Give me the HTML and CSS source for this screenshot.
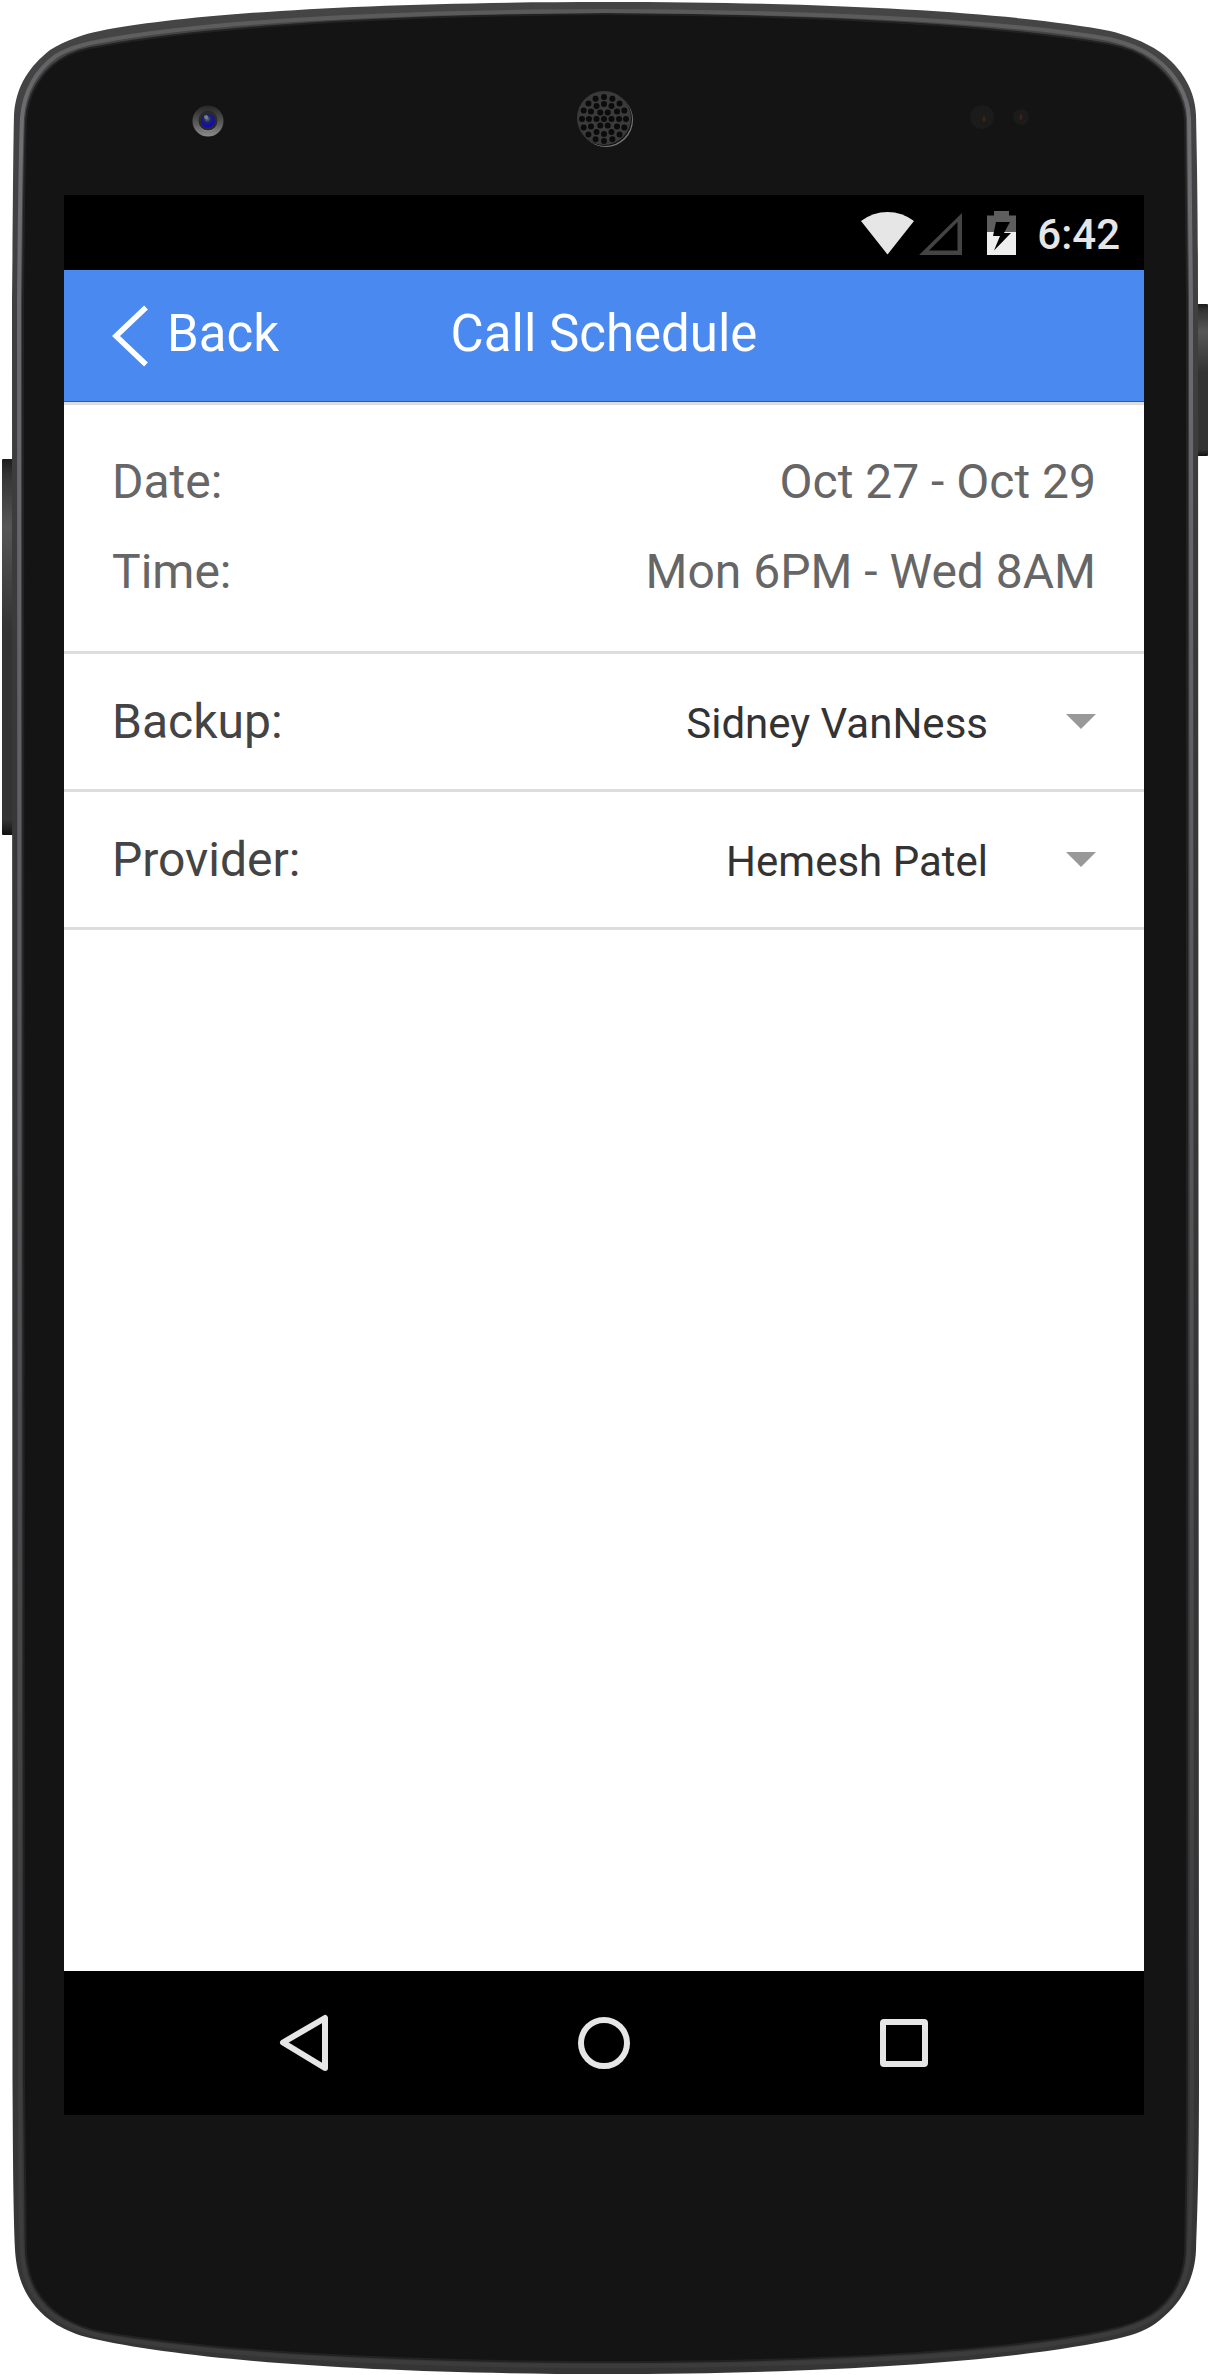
FILE: index.html
```html
<!DOCTYPE html>
<html lang="en">
<head>
  <meta charset="utf-8">
  <meta name="viewport" content="width=device-width, initial-scale=1">
  <title>Call Schedule</title>
  <link rel="stylesheet" href="styles.css">
</head>
<body>
  <div class="phone">
    <svg class="shell" viewBox="0 0 1210 2375" preserveAspectRatio="none" aria-hidden="true">
      <defs>
        <linearGradient id="rim" x1="0" y1="0" x2="0" y2="1">
          <stop offset="0" stop-color="#454546"/>
          <stop offset=".3" stop-color="#38383a"/>
          <stop offset="1" stop-color="#353536"/>
        </linearGradient>
        <linearGradient id="shine" x1="0" y1="0" x2="0" y2="1">
          <stop offset="0" stop-color="#5a5a5c"/>
          <stop offset=".05" stop-color="#707074"/>
          <stop offset=".4" stop-color="#5c5c60"/>
          <stop offset=".8" stop-color="#404042"/>
          <stop offset="1" stop-color="#3c3c3d"/>
        </linearGradient>
        <linearGradient id="key" x1="0" y1="0" x2="0" y2="1">
          <stop offset="0" stop-color="#1c1c1c"/>
          <stop offset=".04" stop-color="#333"/>
          <stop offset=".18" stop-color="#565656"/>
          <stop offset=".45" stop-color="#333"/>
          <stop offset=".96" stop-color="#333"/>
          <stop offset="1" stop-color="#111"/>
        </linearGradient>
      </defs>
      <rect x="2" y="459" width="14" height="376" rx="1" fill="url(#key)"/>
      <rect x="1194" y="304" width="14" height="152" rx="1" fill="url(#key)"/>
      <path fill="url(#rim)" d="M12 300 C13 210 13 160 14 115 C16 85 30 66 50 50 C66 40 84 34 100 31 C180 15 350 2 605 2 C860 2 1030 15 1110 31 C1126 35 1144 41 1160 52 C1182 68 1195 90 1196 115 C1197 160 1198 210 1198 300 L1199 2080 C1199 2150 1198 2200 1196 2250 C1195 2275 1185 2300 1160 2320 C1148 2330 1136 2334 1120 2338 C1020 2361 830 2374 605 2374 C380 2374 190 2361 90 2338 C77 2335 66 2330 57 2325 C27 2306 17 2280 15 2250 C13 2200 13 2150 12.500 2080 Z"/>
      <path fill="#141414" stroke="#222" stroke-width="2" d="M23 300 C24 220 24 170 26 120 C28 95 40 73 60 60 C70 53 86 48 102 46 C190 30 350 16 605 14 C860 16 1020 29 1108 44 C1124 47 1140 53 1150 61 C1172 77 1184 98 1185 120 C1186 170 1186 220 1187 300 L1187 2080 C1187 2150 1186 2200 1185 2253 C1183 2280 1172 2301 1150 2315 C1138 2322 1122 2327 1108 2330 C1010 2351 820 2362 605 2362 C390 2362 200 2350 102 2332 C90 2330 76 2325 64 2318 C38 2302 28 2280 26 2253 C25 2200 25 2150 24 2080 Z"/>
      <path fill="none" stroke="url(#shine)" stroke-width="4" d="M19 300 C20 220 20 170 22 118 C24 92 36 70 56 56 C67 49 84 44 101 41 C190 25 350 12 605 11 C860 12 1022 24 1109 39 C1126 43 1142 49 1153 57 C1176 73 1188 96 1189 118 C1190 170 1190 220 1191 300 L1192 2080 C1192 2150 1191 2200 1189 2253 C1187 2282 1176 2304 1153 2318 C1140 2326 1124 2331 1109 2334 C1010 2356 820 2366 605 2366 C390 2366 200 2354 101 2336 C88 2333 74 2328 61 2321 C34 2305 24 2282 22 2253 C20 2200 20 2150 20 2080 Z"/>
    </svg>

    <div class="bezel" aria-hidden="true">
      <svg class="camera" width="32" height="66" viewBox="0 0 32 66">
        <defs>
          <linearGradient id="ring" x1="0" y1="0" x2="0" y2="1">
            <stop offset="0" stop-color="#262626"/>
            <stop offset=".6" stop-color="#5c5c5c"/>
            <stop offset="1" stop-color="#8c8c8c"/>
          </linearGradient>
          <radialGradient id="lens" cx=".45" cy=".35" r=".7">
            <stop offset="0" stop-color="#66788c"/>
            <stop offset=".35" stop-color="#24245c"/>
            <stop offset=".75" stop-color="#0c0cc0"/>
            <stop offset="1" stop-color="#2a1a50"/>
          </radialGradient>
        </defs>
        <circle cx="16" cy="35" r="15.500" fill="url(#ring)"/>
        <circle cx="16" cy="35" r="10" fill="#2a2a2a" stroke="url(#ring)"/>
        <circle cx="16" cy="35" r="7" fill="url(#lens)"/>
        <circle cx="14" cy="31" r="2" fill="#8aa09a" opacity=".7"/>
      </svg>
      <svg width="62" height="66" viewBox="0 0 62 66">
        <circle cx="33" cy="34" r="27" fill="#777"/>
        <circle cx="32" cy="33" r="27" fill="#111"/>
        <circle cx="31" cy="32" r="27" fill="#3a3a3b"/>
        <g fill="none" stroke="#0b0b0b" stroke-width="6" stroke-linecap="round" stroke-dasharray="0 1">
          <circle cx="31" cy="33" r="22" pathLength="16"/>
          <circle cx="31" cy="33" r="15" pathLength="12"/>
          <circle cx="31" cy="33" r="7.500" pathLength="6"/>
        </g>
        <circle cx="31" cy="33" r="3" fill="#0b0b0b"/>
      </svg>
      <svg class="sensors" width="60" height="66" viewBox="0 0 60 66">
        <circle cx="12" cy="31" r="12" fill="#1b1b1b"/>
        <circle cx="51" cy="31" r="8" fill="#1b1b1b"/>
        <ellipse cx="14" cy="33" rx="1.500" ry="3" fill="#3c2218"/>
        <ellipse cx="51" cy="31" rx="1.500" ry="3" fill="#3c2218"/>
      </svg>
    </div>

    <div class="screen">
      <div class="status">
        <svg width="53" height="44" viewBox="0 0 53 44" role="img" aria-label="Wi-Fi">
          <path d="M0 10 Q12 1 26.500 1 Q41 1 53 10 L26.500 43.500 Z" fill="#e6e6e6"/>
        </svg>
        <svg class="signal" width="43" height="44" viewBox="0 0 43 44" role="img" aria-label="No signal">
          <path d="M43 2 V44 H0 Z M38.500 11 L10 39.500 H38.500 Z" fill="#444" fill-rule="evenodd"/>
        </svg>
        <svg class="battery" width="29" height="44" viewBox="0 0 29 44" role="img" aria-label="Charging">
          <path d="M0 4.500 H7 V0 H22 V4.500 H29 V21 H0 Z" fill="#5e5e5e"/>
          <path d="M0 21 H29 V44 H0 Z" fill="#eee"/>
          <path d="M9 11 H23 L17 22 H24 L7 39.500 L13 25 H6 Z" fill="#000"/>
        </svg>
        <time class="clock">6:42</time>
      </div>

      <header class="appbar">
        <button class="back" type="button">
          <svg width="36" height="66" viewBox="0 0 36 66" aria-hidden="true">
            <path d="M34 6.500 L4 35 L34 63.500" fill="none" stroke="#fff" stroke-width="5.500"/>
          </svg>
          Back
        </button>
        <h1 class="title">Call Schedule</h1>
      </header>

      <main class="content">
        <dl class="details">
          <div class="detail"><dt>Date:</dt><dd>Oct 27 - Oct 29</dd></div>
          <div class="detail"><dt>Time:</dt><dd>Mon 6PM - Wed 8AM</dd></div>
        </dl>
        <form>
          <div class="row">
            <label for="backup">Backup:</label>
            <div class="picker">
              <select id="backup"><option>Sidney VanNess</option><option>Hemesh Patel</option></select>
              <svg class="caret" width="30" height="15" viewBox="0 0 30 15" aria-hidden="true"><path d="M0 0 H30 L15 15 Z" fill="#999"/></svg>
            </div>
          </div>
          <div class="row">
            <label for="provider">Provider:</label>
            <div class="picker">
              <select id="provider"><option>Hemesh Patel</option><option>Sidney VanNess</option></select>
              <svg class="caret" width="30" height="15" viewBox="0 0 30 15" aria-hidden="true"><path d="M0 0 H30 L15 15 Z" fill="#999"/></svg>
            </div>
          </div>
        </form>
      </main>

      <nav class="softkeys" aria-label="System">
        <button type="button" aria-label="Back">
          <svg width="60" height="60" viewBox="0 0 60 60"><path d="M51 5 V55 L9 29.500 Z" fill="none" stroke="#e6e6e6" stroke-width="6" stroke-linejoin="round"/></svg>
        </button>
        <button type="button" aria-label="Home">
          <svg width="60" height="60" viewBox="0 0 60 60"><circle cx="30" cy="30" r="23" fill="none" stroke="#e6e6e6" stroke-width="6"/></svg>
        </button>
        <button type="button" aria-label="Recent apps">
          <svg width="60" height="60" viewBox="0 0 60 60"><rect x="9" y="9" width="42" height="42" rx="1" fill="none" stroke="#e6e6e6" stroke-width="6" stroke-linejoin="round"/></svg>
        </button>
      </nav>
    </div>
  </div>
</body>
</html>
```
FILE: styles.css
```css
* {
  box-sizing: border-box;
}

body {
  margin: 0;
  background: #fff;
  font-family: Roboto, "Liberation Sans", sans-serif;
  font-size: 48px;
}

h1,
dl,
dd {
  margin: 0;
}

svg {
  display: block;
}

button,
select {
  margin: 0;
  padding: 0;
  border: 0;
  background: none;
  font: inherit;
}

.phone {
  position: relative;
  display: flex;
  flex-direction: column;
  min-height: 100vh;
  padding: 0 66px 260px 64px;
}

.shell {
  position: absolute;
  inset: 0;
  width: 100%;
  height: 100%;
}

.bezel {
  position: relative;
  display: grid;
  grid-template-columns: 1fr auto 1fr;
  height: 195px;
  padding: 86px 114px 0;
}

.camera {
  margin-left: 14px;
}

.sensors {
  justify-self: end;
}

.screen {
  position: relative;
  flex: 1;
  display: flex;
  flex-direction: column;
  background: #fff;
}

.status {
  display: flex;
  justify-content: flex-end;
  align-items: center;
  height: 75px;
  padding-right: 24px;
  background: #000;
}

.signal {
  margin-left: 5px;
}

.battery {
  margin: 0 21px 0 25px;
}

.clock {
  padding-top: 4px;
  color: #e6e6e6;
  font-size: 42px;
  font-weight: 500;
  line-height: 48px;
}

.appbar {
  display: grid;
  grid-template-columns: 1fr auto 1fr;
  align-items: center;
  height: 132px;
  padding: 0 48px 4px;
  border-bottom: 1px solid #1a5cd0;
  background: #4a89f0;
  color: #fff;
  font-size: 51px;
}

.back {
  display: flex;
  align-items: center;
  gap: 19px;
  justify-self: start;
  color: #fff;
  line-height: 66px;
}

.title {
  font-size: 51px;
  font-weight: 400;
  line-height: 66px;
}

.content {
  flex: 1;
  border-top: 3px solid #ddd;
}

.details {
  padding: 32px 48px 34px;
  border-bottom: 3px solid #ddd;
  color: #666;
  line-height: 90px;
}

.detail {
  display: flex;
  justify-content: space-between;
}

.row {
  display: flex;
  align-items: center;
  height: 138px;
  padding: 0 48px;
  border-bottom: 3px solid #ddd;
  color: #444;
}

.picker {
  flex: 1;
  display: grid;
  align-items: center;
}

.picker select,
.caret {
  grid-area: 1 / 1;
}

.picker select {
  appearance: none;
  width: 100%;
  height: 135px;
  padding: 3px 108px 0 0;
  color: #333;
  font-size: 42px;
  text-align-last: right;
}

.caret {
  justify-self: end;
  pointer-events: none;
}

.softkeys {
  display: grid;
  grid-template-columns: repeat(3, 300px);
  justify-content: center;
  height: 144px;
  background: #000;
}

.softkeys button {
  display: grid;
  place-items: center;
}
```
